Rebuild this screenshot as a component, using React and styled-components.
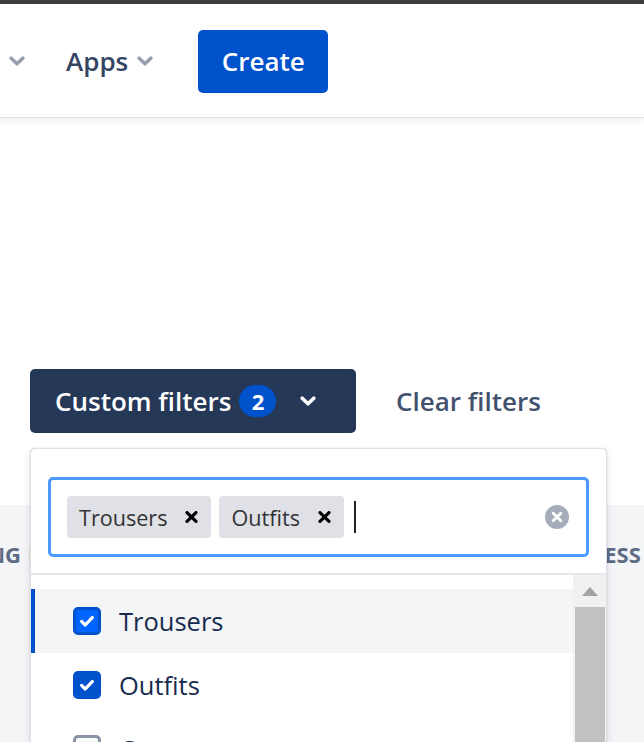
import React from "react";
import styled, { createGlobalStyle } from "styled-components";

const Global = createGlobalStyle`
  html, body { margin: 0; padding: 0; background: #ffffff; }
  body { font-family: "Open Sans", "Noto Sans", sans-serif; }
  * { box-sizing: border-box; }
`;

const Page = styled.div`
  width: 644px;
  height: 742px;
  overflow: hidden;
  display: flex;
  flex-direction: column;
  background: #ffffff;
`;

const TopBar = styled.div`
  height: 4px;
  flex: none;
  background: #3d3d3d;
`;

const Header = styled.header`
  height: 113px;
  flex: none;
  display: flex;
  align-items: center;
  padding: 1px 0 0 9px;
  background: #ffffff;
  box-shadow: 0 1px 0 #dfe1e6, 0 3px 7px rgba(9, 30, 66, 0.09);
  position: relative;
  z-index: 2;
`;

const NavItem = styled.div`
  display: flex;
  align-items: center;
  gap: 9px;
  margin-right: ${(p) => p.$gapAfter}px;
  font-size: 26px;
  font-weight: 600;
  color: #344563;
  line-height: 1;
`;

const NavChevron = styled.svg`
  width: 16px;
  height: 10px;
  color: #97a0af;
  flex: none;
`;

const CreateButton = styled.button`
  width: 130px;
  height: 63px;
  margin-left: 1px;
  border: none;
  border-radius: 5px;
  background: #0052cc;
  color: #ffffff;
  font-family: inherit;
  font-size: 26px;
  font-weight: 600;
  padding: 0;
`;

const Content = styled.div`
  flex: none;
  height: 388px;
  padding: 252px 0 0 30px;
`;

const FilterBar = styled.div`
  display: flex;
  align-items: center;
  gap: 16px;
`;

const FilterWrap = styled.div`
  position: relative;
  z-index: 3;
`;

const CustomButton = styled.button`
  height: 64px;
  width: 326px;
  display: flex;
  align-items: center;
  padding: 0 0 0 25px;
  border: none;
  border-radius: 5px;
  background: #253858;
  color: #ffffff;
  font-family: inherit;
  font-size: 26px;
  font-weight: 600;
`;

const Badge = styled.span`
  width: 37px;
  height: 32px;
  border-radius: 16px;
  margin-left: 8px;
  background: #0052cc;
  color: #ffffff;
  font-size: 22px;
  font-weight: 700;
  display: flex;
  align-items: center;
  justify-content: center;
`;

const BtnChevron = styled.svg`
  width: 16px;
  height: 10px;
  margin-left: 24px;
  color: #ffffff;
`;

const ClearButton = styled.button`
  height: 64px;
  padding: 0 24px;
  border: none;
  background: transparent;
  color: #42526e;
  font-family: inherit;
  font-size: 26px;
  font-weight: 600;
`;

const Panel = styled.div`
  position: absolute;
  top: calc(100% + 15px);
  left: 0;
  width: 577px;
  height: 320px;
  background: #ffffff;
  border: 1px solid #dfe1e6;
  border-radius: 5px;
  box-shadow: 0 4px 10px -2px rgba(9, 30, 66, 0.2), 0 0 1px rgba(9, 30, 66, 0.3);
  display: flex;
  flex-direction: column;
  overflow: hidden;
`;

const InputArea = styled.div`
  padding: 28px 17px 16px 17px;
  border-bottom: 2px solid #e6e7ea;
  flex: none;
`;

const SelectBox = styled.div`
  height: 80px;
  border: 3px solid #4c9aff;
  border-radius: 5px;
  display: flex;
  align-items: center;
  padding: 0 17px 0 16px;
  gap: 8px;
`;

const Tag = styled.div`
  height: 42px;
  display: flex;
  align-items: center;
  gap: 18px;
  padding: 0 13px 0 12px;
  background: #dfe1e6;
  border-radius: 4px;
  font-size: 21.6px;
  color: #333333;
`;

const TagX = styled.svg`
  width: 13px;
  height: 12px;
  color: #000000;
`;

const Caret = styled.span`
  width: 2px;
  height: 32px;
  margin-left: 2px;
  background: #222222;
`;

const ClearIcon = styled.svg`
  width: 24px;
  height: 24px;
  margin-left: auto;
`;

const ListArea = styled.div`
  flex: 1;
  display: flex;
  min-height: 0;
`;

const List = styled.div`
  flex: 1;
  padding-top: 14px;
`;

const Option = styled.div`
  height: 64px;
  display: flex;
  align-items: center;
  gap: 18px;
  padding-left: 42px;
  font-size: 25.5px;
  color: #172b4d;
  background: ${(p) => (p.$active ? "#f4f5f7" : "#ffffff")};
  box-shadow: ${(p) => (p.$active ? "inset 4px 0 0 #0052cc" : "none")};
`;

const Box = styled.span`
  width: 28px;
  height: 28px;
  flex: none;
  border-radius: 5px;
  display: flex;
  align-items: center;
  justify-content: center;
  background: ${(p) => (p.$checked ? (p.$active ? "#0065ff" : "#0052cc") : "#fafbfc")};
  border: ${(p) => (p.$checked ? (p.$active ? "3px solid #0052cc" : "none") : "3px solid #8993a4")};
`;

const Track = styled.div`
  width: 33px;
  flex: none;
  background: #f1f1f1;
  display: flex;
  flex-direction: column;
  align-items: center;
`;

const ArrowCell = styled.div`
  height: 32px;
  width: 100%;
  display: flex;
  align-items: center;
  justify-content: center;
`;

const Thumb = styled.div`
  width: 30px;
  flex: 1;
  background: #c1c1c1;
`;

const TableArea = styled.div`
  flex: 1;
  background: #f4f5f7;
  position: relative;
  z-index: 1;
`;

const HeadRow = styled.div`
  height: 100px;
  display: flex;
  align-items: flex-start;
  padding-top: 34px;
  overflow: hidden;
  font-size: 22px;
  font-weight: 700;
  color: #5e6c84;
  white-space: nowrap;
  line-height: 30px;
`;

const HeadCell = styled.div`
  width: ${(p) => (p.$w ? `${p.$w}px` : "auto")};
  flex: none;
  overflow: ${(p) => (p.$end ? "hidden" : "visible")};
  display: flex;
  justify-content: ${(p) => (p.$end ? "flex-end" : "flex-start")};
  margin-left: ${(p) => p.$ml || 0}px;
`;

const Chevron = ({ as: C = NavChevron }) => (
  <C viewBox="0 0 16 10">
    <path d="M2.2 2.2 L8 7.8 L13.8 2.2" fill="none" stroke="currentColor" strokeWidth="3.6" strokeLinecap="round" strokeLinejoin="round" />
  </C>
);

const Check = () => (
  <svg width="20" height="20" viewBox="0 0 20 20">
    <path d="M4.6 10.4 L8.3 14 L15.4 6.4" fill="none" stroke="#ffffff" strokeWidth="3.2" strokeLinecap="round" strokeLinejoin="round" />
  </svg>
);

const X = () => (
  <TagX viewBox="0 0 13 12">
    <path d="M2 1.6 L11 10.4 M11 1.6 L2 10.4" stroke="currentColor" strokeWidth="3.2" strokeLinecap="round" />
  </TagX>
);

const options = [
  { label: "Trousers", checked: true, active: true },
  { label: "Outfits", checked: true },
  { label: "Coats", checked: false },
  { label: "Dresses", checked: false },
];

export default function App() {
  return (
    <>
      <Global />
      <Page>
        <TopBar />
        <Header>
          <NavItem $gapAfter={41}>
            <Chevron />
          </NavItem>
          <NavItem $gapAfter={44}>
            <span>Apps</span>
            <Chevron />
          </NavItem>
          <CreateButton>Create</CreateButton>
        </Header>
        <Content>
          <FilterBar>
            <FilterWrap>
              <CustomButton>
                <span>Custom filters</span>
                <Badge>2</Badge>
                <Chevron as={BtnChevron} />
              </CustomButton>
              <Panel>
                <InputArea>
                  <SelectBox>
                    <Tag>
                      <span>Trousers</span>
                      <X />
                    </Tag>
                    <Tag>
                      <span>Outfits</span>
                      <X />
                    </Tag>
                    <Caret />
                    <ClearIcon viewBox="0 0 24 24">
                      <circle cx="12" cy="12" r="12" fill="#a5adba" />
                      <path d="M8.2 8.2 L15.8 15.8 M15.8 8.2 L8.2 15.8" stroke="#ffffff" strokeWidth="2.8" strokeLinecap="round" />
                    </ClearIcon>
                  </SelectBox>
                </InputArea>
                <ListArea>
                  <List>
                    {options.map((o) => (
                      <Option key={o.label} $active={o.active}>
                        <Box $checked={o.checked} $active={o.active}>
                          {o.checked && <Check />}
                        </Box>
                        <span>{o.label}</span>
                      </Option>
                    ))}
                  </List>
                  <Track>
                    <ArrowCell>
                      <svg width="16" height="9" viewBox="0 0 16 9">
                        <path d="M8 0 L16 9 L0 9 Z" fill="#a3a3a3" />
                      </svg>
                    </ArrowCell>
                    <Thumb />
                  </Track>
                </ListArea>
              </Panel>
            </FilterWrap>
            <ClearButton>Clear filters</ClearButton>
          </FilterBar>
        </Content>
        <TableArea>
          <HeadRow>
            <HeadCell $w={21} $end>
              <span>SORTING</span>
            </HeadCell>
            <HeadCell $w={500} $ml={7}>
              <span>PRIORITY</span>
            </HeadCell>
            <HeadCell>
              <span>PROGRESS</span>
            </HeadCell>
          </HeadRow>
        </TableArea>
      </Page>
    </>
  );
}
